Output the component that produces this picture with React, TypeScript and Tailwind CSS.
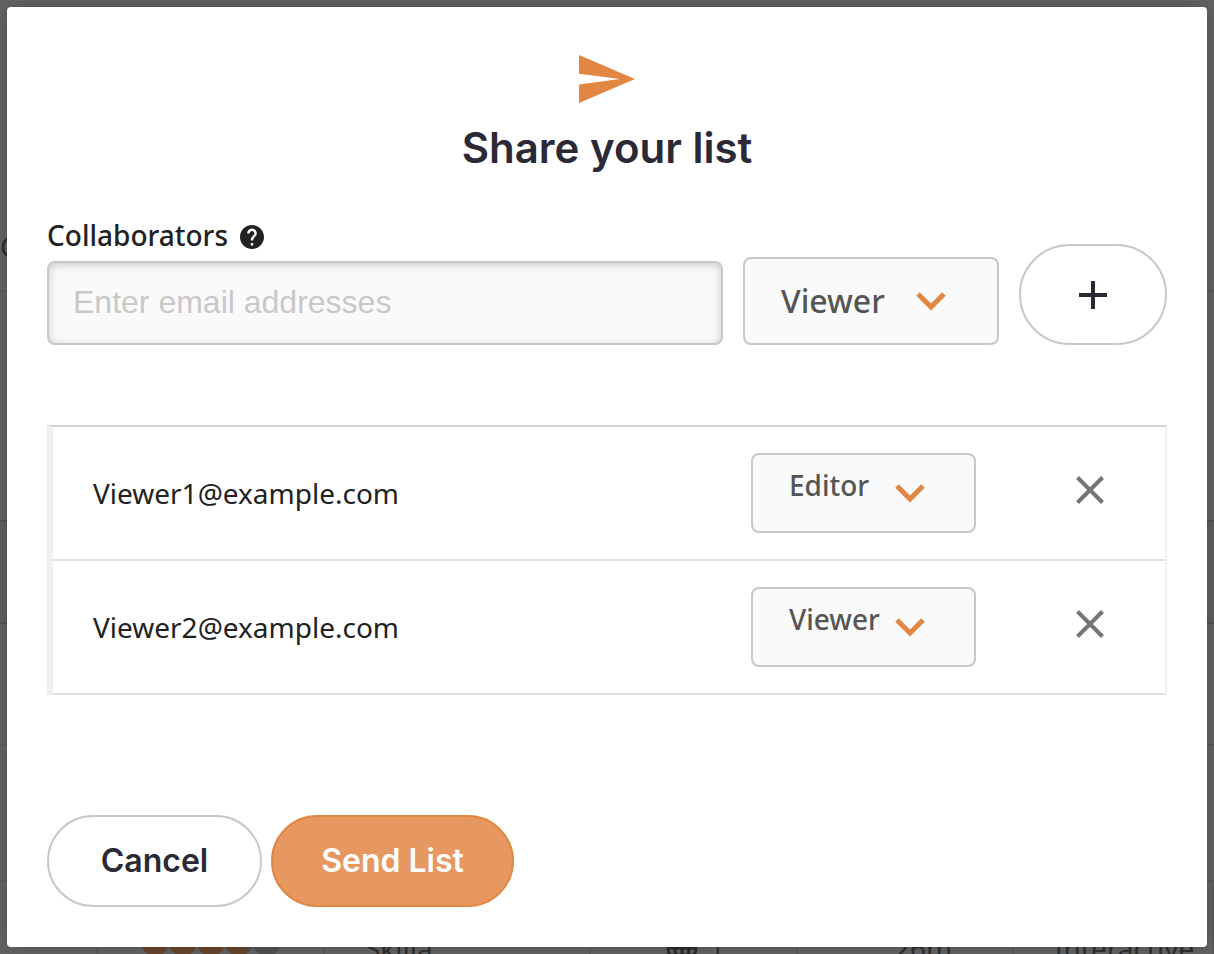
import { useState } from 'react';
import type { FormEvent } from 'react';

type Role = 'Viewer' | 'Editor';

type Collaborator = {
  email: string;
  role: Role;
};

type RoleSelectProps = {
  label: string;
  value: Role;
  onChange: (role: Role) => void;
  large?: boolean;
};

const DEFAULT_COLLABORATORS: Collaborator[] = [
  { email: 'Viewer1@example.com', role: 'Editor' },
  { email: 'Viewer2@example.com', role: 'Viewer' },
];

function SendIcon() {
  return (
    <svg width="56" height="48" viewBox="0 0 56 48" className="fill-[#e18743]" aria-hidden="true">
      <path d="M0 0 56 24 0 48V29.5L41 24 0 18.7Z" />
    </svg>
  );
}

function HelpIcon() {
  return (
    <svg width="24" height="24" viewBox="2 2 20 20" className="fill-[#222]" aria-hidden="true">
      <path d="M12 2C6.48 2 2 6.48 2 12s4.48 10 10 10 10-4.48 10-10S17.52 2 12 2zm1 17h-2v-2h2v2zm2.07-7.75-.9.92C13.45 12.9 13 13.5 13 15h-2v-.5c0-1.1.45-2.1 1.17-2.83l1.24-1.26c.37-.36.59-.86.59-1.41 0-1.1-.9-2-2-2s-2 .9-2 2H8c0-2.21 1.79-4 4-4s4 1.79 4 4c0 .88-.36 1.68-.93 2.25z" />
    </svg>
  );
}

function Chevron() {
  return (
    <svg width="30" height="20" viewBox="0 0 30 20" fill="none" aria-hidden="true">
      <path d="M2 3 15 16 28 3" stroke="#e18743" strokeWidth="5" />
    </svg>
  );
}

function PlusIcon() {
  return (
    <svg width="28" height="28" viewBox="0 0 28 28" className="fill-[#2b2935]" aria-hidden="true">
      <path d="M12 0h4v12h12v4H16v12h-4V16H0v-4h12z" />
    </svg>
  );
}

function CloseIcon() {
  return (
    <svg width="28" height="28" viewBox="0 0 28 28" fill="none" aria-hidden="true">
      <path d="M1.5 1.5 26.5 26.5M26.5 1.5 1.5 26.5" stroke="#757575" strokeWidth="4" />
    </svg>
  );
}

function GlobeIcon() {
  return (
    <svg width="32" height="32" viewBox="0 0 32 32" fill="none" stroke="#2b2b2b" strokeWidth="3" aria-hidden="true">
      <circle cx="16" cy="16" r="14" />
      <ellipse cx="16" cy="16" rx="7" ry="14" />
      <path d="M16 2v28M2 16h28M4 23h24M4 9h24" />
    </svg>
  );
}

function RoleSelect({ label, value, onChange, large }: RoleSelectProps) {
  return (
    <div className={large ? 'relative w-64 shrink-0' : 'relative w-[225px]'}>
      <select
        aria-label={label}
        value={value}
        onChange={(e) => onChange(e.target.value as Role)}
        className={`w-full appearance-none rounded-lg border-2 border-[#c8c8c8] bg-[#fafafa] pl-9 font-medium text-[#555] ${
          large ? 'h-[88px] text-[32px]' : 'h-20 pb-4 text-[28px]'
        }`}
      >
        <option>Viewer</option>
        <option>Editor</option>
      </select>
      <span
        className={`pointer-events-none absolute ${large ? 'top-[34px] right-[53px]' : 'top-[30px] right-[51px]'}`}
      >
        <Chevron />
      </span>
    </div>
  );
}

// Dimmed results list that stays visible around the dialog
function PageBehind() {
  return (
    <div
      className="absolute inset-0 flex flex-col overflow-hidden bg-[#636363] text-[28px] leading-10 text-[#2e2e2e]"
      aria-hidden="true"
    >
      <div className="flex h-[290px] shrink-0 items-end pb-6">C</div>
      <div className="h-[230px] shrink-0 border-t-2 border-[#5b5b5b]" />
      <div className="h-[104px] shrink-0 border-y-2 border-[#525252] bg-[#5f5f5f]" />
      <div className="h-[120px] shrink-0" />
      <div className="h-[136px] shrink-0 border-t-2 border-[#595959]" />
      <div className="grid h-[134px] shrink-0 grid-cols-[98px_227px_266px_207px_216px_1fr] border-t-2 border-[#595959] *:flex *:items-center *:border-r-2 *:border-[#5a5a5a]">
        <div />
        <div className="pb-3 pl-[43px]">
          <span className="size-7 rounded-full bg-[#69452d]" />
          <span className="size-7 rounded-full bg-[#69452d]" />
          <span className="size-7 rounded-full bg-[#69452d]" />
          <span className="size-7 rounded-full bg-linear-to-r from-[#69452d] from-80% to-[#505050] to-80%" />
          <span className="size-7 rounded-full bg-[#505050]" />
        </div>
        <div className="pl-10">Skilla</div>
        <div className="gap-3 pl-[75px]">
          <GlobeIcon />
          <span>|</span>
        </div>
        <div className="pl-24">26m</div>
        <div className="pl-10">Interactive</div>
      </div>
    </div>
  );
}

export default function App() {
  const [collaborators, setCollaborators] = useState<Collaborator[]>(DEFAULT_COLLABORATORS);
  const [email, setEmail] = useState('');
  const [role, setRole] = useState<Role>('Viewer');

  const handleAdd = (e: FormEvent) => {
    e.preventDefault();
    if (!email.trim()) return;
    setCollaborators((prev) => [...prev, { email: email.trim(), role }]);
    setEmail('');
  };

  const handleRemove = (target: string) => {
    setCollaborators((prev) => prev.filter((c) => c.email !== target));
  };

  const changeRole = (target: string, next: Role) => {
    setCollaborators((prev) => prev.map((c) => (c.email === target ? { ...c, role: next } : c)));
  };

  return (
    <div className="relative flex min-h-screen flex-col p-[7px] font-['Noto_Sans',sans-serif]">
      <PageBehind />

      <main
        role="dialog"
        aria-labelledby="share-title"
        className="relative flex grow flex-col rounded bg-white px-10 pt-12 pb-10 text-[#222] shadow-[0_0_16px_rgba(0,0,0,0.2)]"
      >
        <header className="flex flex-col items-center gap-3">
          <SendIcon />
          <h1
            id="share-title"
            className="font-['Inter',sans-serif] text-[42px] leading-[66px] font-semibold text-[#2b2935]"
          >
            Share your list
          </h1>
        </header>

        <form onSubmit={handleAdd} className="mt-7 flex items-end gap-5">
          <div className="flex min-w-0 grow flex-col">
            <div className="flex items-center gap-3">
              <label htmlFor="email" className="text-[28px] leading-[52px] font-medium">
                Collaborators
              </label>
              <button type="button" aria-label="About collaborators" className="pt-1">
                <HelpIcon />
              </button>
            </div>
            <input
              id="email"
              type="email"
              value={email}
              onChange={(e) => setEmail(e.target.value)}
              placeholder="Enter email addresses"
              className="h-[84px] w-full rounded-lg border-2 border-[#c8c8c8] bg-[#fafafa] px-6 pb-0.5 font-['Liberation_Sans',sans-serif] text-[32px] shadow-[inset_0_2px_8px_rgba(0,0,0,0.2)] placeholder:text-[#c8c8c8]"
            />
          </div>
          <RoleSelect label="Role" value={role} onChange={setRole} large />
          <button
            type="submit"
            aria-label="Add collaborator"
            className="flex h-[101px] w-[148px] shrink-0 items-center justify-center rounded-full border-2 border-[#c8c8c8] bg-white"
          >
            <PlusIcon />
          </button>
        </form>

        <table className="mt-20 w-full border-separate border-spacing-0 border-t-2 border-r-2 border-l-6 border-t-[#d2d2d2] border-r-[#efefef] border-l-[#efefef]">
          <tbody>
            {collaborators.map((c) => (
              <tr key={c.email} className="h-[134px]">
                <td className="border-b-2 border-[#e1e1e1] pl-10 text-[28px]">{c.email}</td>
                <td className="w-[264px] border-b-2 border-[#e1e1e1]">
                  <RoleSelect
                    label={`Role of ${c.email}`}
                    value={c.role}
                    onChange={(next) => changeRole(c.email, next)}
                  />
                </td>
                <td className="w-[150px] border-b-2 border-[#e1e1e1] pb-1.5">
                  <button
                    type="button"
                    aria-label={`Remove ${c.email}`}
                    onClick={() => handleRemove(c.email)}
                    className="mx-auto flex size-12 items-center justify-center"
                  >
                    <CloseIcon />
                  </button>
                </td>
              </tr>
            ))}
          </tbody>
        </table>

        <footer className="mt-auto flex gap-[9px] font-['Inter',sans-serif] text-[32px] font-semibold">
          <button
            type="button"
            className="h-[92px] w-[215px] rounded-full border-2 border-[#c8c8c8] bg-white text-[#2b2935]"
          >
            Cancel
          </button>
          <button
            type="button"
            className="h-[92px] w-[243px] rounded-full border-2 border-[#e18743] bg-[#e79861] text-white"
          >
            Send List
          </button>
        </footer>
      </main>
    </div>
  );
}
